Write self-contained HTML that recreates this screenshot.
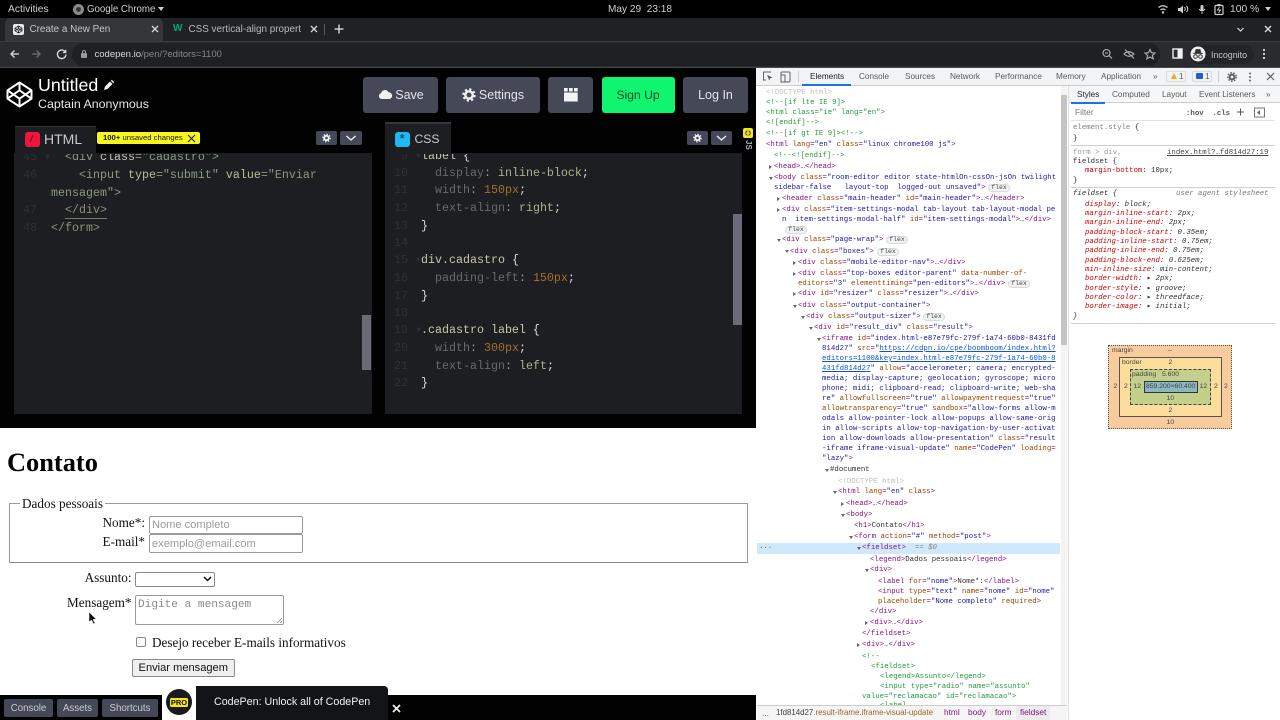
<!DOCTYPE html>
<html lang="en"><head><meta charset="utf-8"><title>Create a New Pen</title>
<style>
*{box-sizing:border-box}
html,body{margin:0;padding:0;width:1280px;height:720px;overflow:hidden;background:#000;font-family:"Liberation Sans",sans-serif}
.b{position:absolute}
.t{position:absolute;white-space:pre}
.btn{position:absolute;top:77px;height:36px;background:#444857;border-radius:3px;color:#e4e4ea;font-size:12.5px;line-height:36px;text-align:center;white-space:pre}
.m{font-family:"Liberation Mono",monospace}
.d{position:absolute;white-space:pre;font:7.35px/10px "Liberation Mono",monospace;color:#333;margin-top:2px}
s{color:#881280;text-decoration:none}
u{color:#994500;text-decoration:none}
em{color:#1a1aa6;font-style:normal}
em.l{color:#1155cc;text-decoration:underline}
.c{color:#239b3c}
.o::before,.x::before{content:"";position:absolute;left:-5.5px}
.o::before{top:3.5px;border-left:2.2px solid transparent;border-right:2.2px solid transparent;border-top:3.6px solid #666}
.x::before{top:3px;border-top:2.2px solid transparent;border-bottom:2.2px solid transparent;border-left:3.6px solid #666}
.fx{position:absolute;width:22px;height:8px;border:1px solid #d8dadd;background:#f1f3f4;border-radius:4px;font:6.5px/6px "Liberation Mono",monospace;color:#444;text-align:center;margin-top:2px}
.tab{position:absolute;top:72px;font-size:8.2px;line-height:10px;color:#5a5a5a;white-space:pre}
.st{position:absolute;white-space:pre;font:7.35px/9px "Liberation Mono",monospace;color:#303030;margin-top:2px}
.st i{color:#c80000}
.code{position:absolute;white-space:pre;font:11.67px/17px "Liberation Mono",monospace;margin-top:1px}
.ln{position:absolute;white-space:pre;font:11.67px/17px "Liberation Mono",monospace;color:#2f3035;margin-top:1px}
.bm{position:absolute;font-size:6.8px;line-height:8px;color:#444;white-space:pre}
.ser{position:absolute;white-space:pre;font:13.2px/16px "Liberation Serif",serif;color:#111}
.inp{position:absolute;background:#fff;border:1px solid #9a9a9a;border-radius:2px;font:11.1px/16px "Liberation Sans",sans-serif;color:#9b9b9b;padding-left:2px;white-space:pre}
.fb{position:absolute;top:699px;height:18px;background:#444857;border-radius:2px;color:#c9c9d2;font-size:9.7px;line-height:19px;text-align:center}
</style></head><body>

<!-- GNOME top bar -->
<div class="b" style="left:0;top:0;width:1280px;height:18px;background:#000"></div>
<div class="t" style="left:8px;top:4px;font-size:10.3px;line-height:12px;color:#d0d0d0">Activities</div>
<svg class="b" style="left:72px;top:3px" width="13" height="13"><circle cx="6.5" cy="6.5" r="5.5" fill="#8a8a8a"/><circle cx="6.5" cy="6.5" r="2.4" fill="#333"/></svg>
<div class="t" style="left:87px;top:4px;font-size:9.7px;line-height:12px;color:#d0d0d0">Google Chrome</div>
<div class="b" style="left:158px;top:7px;border-left:3.5px solid transparent;border-right:3.5px solid transparent;border-top:4px solid #d0d0d0"></div>
<div class="t" style="left:608px;top:4px;font-size:10.1px;line-height:12px;color:#d0d0d0">May 29  23:18</div>
<svg class="b" style="left:1157px;top:3px" width="80" height="13" fill="none" stroke="#d0d0d0">
<path d="M1.5 4.5Q6 1 10.5 4.500M3.500 7Q6 5 8.500 7" stroke-width="1.300"/><circle cx="6" cy="9.500" r="1.200" fill="#d0d0d0" stroke="none"/>
<path d="M21 5h2l3-2.500v8L23 8h-2z" fill="#d0d0d0" stroke="none"/><path d="M27.500 4q1.500 2 0 4M29.500 3q2.500 3 0 6"/>
<rect x="43.500" y="2" width="3" height="6" rx="1.500" fill="#d0d0d0" stroke="none"/><path d="M42 6q3 4 6 0M45 9v2"/>
<rect x="58" y="2.500" width="8" height="9" rx="1" stroke-width="1.200"/><path d="M60.500 1.500h3" stroke-width="1.200"/><path d="M62.500 4l-2 3h3l-2 3" stroke-width=".9"/>
</svg>
<div class="t" style="left:1230px;top:4px;font-size:10.3px;line-height:12px;color:#d0d0d0">100 %</div>
<div class="b" style="left:1265px;top:7px;border-left:3.500px solid transparent;border-right:3.500px solid transparent;border-top:4px solid #d0d0d0"></div>

<!-- Chrome tabs -->
<div class="b" style="left:0;top:18px;width:1280px;height:23px;background:#202124"></div>
<div class="b" style="left:5px;top:18px;width:158px;height:23px;background:#35363a;border-radius:6px 6px 0 0"></div>
<div class="b" style="left:13px;top:24px;width:11px;height:11px;background:#e8e8e8;border-radius:2px"></div>
<svg class="b" style="left:14px;top:25px" width="9" height="9" fill="none" stroke="#222" stroke-width=".8"><path d="M4.500 1L8 3.200V5.800L4.500 8 1 5.800V3.200zM1 3.200L4.500 5.500 8 3.200M4.500 1V3.300M1 5.800L4.500 3.400 8 5.800M4.500 8V5.600"/></svg>
<div class="t" style="left:29.500px;top:24px;font-size:9.9px;line-height:12px;color:#c4c5c8">Create a New Pen</div>
<svg class="b" style="left:151px;top:25px" width="8" height="8" stroke="#d8d8d8" stroke-width="1.300"><path d="M1 1L7 7M7 1L1 7"/></svg>
<div class="t" style="left:173px;top:22px;font-size:10px;line-height:13px;font-weight:bold;color:#04aa6d">W</div>
<div class="t" style="left:188.500px;top:24px;font-size:9.9px;line-height:12px;color:#b8b9bc;width:116px;overflow:hidden">CSS vertical-align propert</div>
<svg class="b" style="left:310px;top:25px" width="8" height="8" stroke="#d8d8d8" stroke-width="1.300"><path d="M1 1L7 7M7 1L1 7"/></svg>
<div class="b" style="left:324px;top:24px;width:1px;height:11px;background:#5a5a5e"></div>
<svg class="b" style="left:334px;top:24px" width="10" height="10" stroke="#e8e8e8" stroke-width="1.300"><path d="M5 .5V9.500M.5 5H9.500"/></svg>
<svg class="b" style="left:1236px;top:25px" width="40" height="9" fill="none" stroke="#d8d8d8" stroke-width="1.200"><path d="M1.500 3L4.500 6 7.500 3"/><path d="M29 1l6 6M35 1l-6 6" stroke-width="1.400"/></svg>

<!-- Chrome toolbar -->
<div class="b" style="left:0;top:41px;width:1280px;height:27px;background:#2a2b2e;border-top:1px solid #3b3c3f;border-bottom:1px solid #48494c"></div>
<div class="b" style="left:72px;top:43px;width:1088px;height:23px;background:#1f2023;border-radius:12px"></div>
<div class="b" style="left:1190px;top:45px;width:64px;height:19px;background:#232427;border-radius:10px"></div>
<svg class="b" style="left:9px;top:48px" width="60" height="12" fill="none" stroke-width="1.300"><path d="M10 6H2M5.500 2.500L2 6l3.500 3.500" stroke="#dcdcdc"/><path d="M23 6h8M27.500 2.500L31 6l-3.500 3.500" stroke="#6d6e71"/><path d="M56 3.500A4.300 4.300 0 1 0 57 6.500" stroke="#dcdcdc"/><path d="M57 1.500v3.300h-3.300" fill="#dcdcdc" stroke="#dcdcdc" stroke-width=".6"/></svg>
<svg class="b" style="left:80px;top:49px" width="8" height="10"><rect x="1" y="4" width="6" height="5" rx="1" fill="#9a9b9e"/><path d="M2.500 4V3a1.500 1.500 0 0 1 3 0V4" fill="none" stroke="#9a9b9e"/></svg>
<div class="t" style="left:94.500px;top:49px;font-size:9.5px;line-height:12px;color:#d6d6d8">codepen.io<span style="color:#85868a">/pen/?editors=1100</span></div>
<svg class="b" style="left:1101px;top:48px" width="56" height="12" fill="none" stroke="#b4b5b8" stroke-width="1.100"><circle cx="5.500" cy="5" r="3.500"/><path d="M8 7.500L11 10.500M4 5h3"/><path d="M23 6q4.500-4.500 10 0-5 4.500-10 0zM24 1.500L33 10.500"/><path d="M49 1.500l1.500 3.200 3.500.4-2.600 2.300.8 3.400-3.200-1.800-3.200 1.800.8-3.400L44 5.100l3.500-.4z"/></svg>
<svg class="b" style="left:1172px;top:48px" width="11" height="11"><rect x="1" y="1" width="9" height="9" fill="none" stroke="#f0f0f0" stroke-width="1.400"/><rect x="5.500" y="1" width="4.500" height="9" fill="#f0f0f0"/></svg>
<svg class="b" style="left:1190px;top:46px" width="16" height="16"><circle cx="8" cy="8" r="7.500" fill="#efefef"/><path d="M3 7.500h10M5 7l1-3.500h4L11 7z" fill="#333" stroke="#333" stroke-width=".7"/><circle cx="5.500" cy="10.500" r="1.800" fill="none" stroke="#333"/><circle cx="10.500" cy="10.500" r="1.800" fill="none" stroke="#333"/></svg>
<div class="t" style="left:1211px;top:49px;font-size:8.9px;line-height:12px;color:#c4c5c8">Incognito</div>
<svg class="b" style="left:1262px;top:48px" width="4" height="12" fill="#d8d8d8"><circle cx="2" cy="2" r="1.100"/><circle cx="2" cy="6" r="1.100"/><circle cx="2" cy="10" r="1.100"/></svg>

<!-- CodePen header -->
<div class="b" style="left:0;top:68px;width:756px;height:54px;background:#020203"></div>
<svg class="b" style="left:6px;top:81px" width="27" height="27" fill="none" stroke="#fff" stroke-width="2" stroke-linejoin="round"><path d="M13.500 1.500L25.500 9.300V17.700L13.500 25.500 1.500 17.700V9.300zM1.500 9.300L13.500 17.700 25.500 9.300M13.500 1.500V9.300M1.500 17.700L13.500 9.300 25.500 17.700M13.500 25.500V17.700"/></svg>
<div class="t" style="left:38px;top:75px;font-size:17.8px;line-height:20px;color:#fff;font-weight:500">Untitled</div>
<svg class="b" style="left:103px;top:79px" width="12" height="12" fill="#f2f2f2"><path d="M1 11l1-3.500 5-5 2.500 2.500-5 5zM7.800 1.800l1-1 2.400 2.400-1 1z"/></svg>
<div class="t" style="left:38px;top:96px;font-size:12.400px;line-height:16px;color:#e6e6e6">Captain Anonymous</div>
<div class="btn" style="left:363px;width:75px;padding-left:18px">Save</div>
<svg class="b" style="left:378px;top:89px" width="15" height="11" fill="#f0f0f0"><path d="M3.500 10A3 3 0 0 1 3 4.200 4 4 0 0 1 10.500 3.300 3.400 3.400 0 0 1 11.500 10z"/></svg>
<div class="btn" style="left:446px;width:94px;padding-left:17px">Settings</div>
<svg class="b" style="left:461.500px;top:88px" width="14" height="14" fill="none"><circle cx="7" cy="7" r="3.700" stroke="#f0f0f0" stroke-width="2.400"/><circle cx="7" cy="7" r="5.600" stroke="#f0f0f0" stroke-width="2.200" stroke-dasharray="2.200 2.200"/></svg>
<div class="btn" style="left:548px;width:45px"></div>
<svg class="b" style="left:564px;top:88px" width="14" height="14" fill="#f4f4f4"><rect x="0" y="0" width="3.700" height="3.500"/><rect x="5" y="0" width="3.700" height="3.500"/><rect x="10" y="0" width="3.700" height="3.500"/><rect x="0" y="4.500" width="13.700" height="9"/></svg>
<div class="btn" style="left:601.500px;width:73px;background:#10f56f;color:#0a4a2a;font-size:12.2px">Sign Up</div>
<div class="btn" style="left:683px;width:65px">Log In</div>

<!-- Editor panes -->
<div class="b" style="left:0;top:122px;width:756px;height:306px;background:#020203"></div>
<div class="b" style="left:14px;top:153px;width:358px;height:261px;background:#1d1e22"></div>
<div class="b" style="left:385px;top:153px;width:357px;height:261px;background:#1d1e22"></div>
<div class="b" style="left:15px;top:126px;width:81px;height:28px;background:#1d1e22;border-top:1px solid #333"></div>
<div class="b" style="left:385px;top:122px;width:66px;height:32px;background:#1d1e22;border-top:2px solid #34363c"></div>
<div class="b" style="left:25px;top:132px;width:15px;height:15px;border-radius:3px;background:#f0153f"></div>
<div class="t" style="left:30px;top:132px;font:italic bold 10px/15px 'Liberation Sans',sans-serif;color:#7c0a20">/</div>
<div class="t" style="left:44px;top:130px;font-size:14px;line-height:18px;color:#c7c9d0">HTML</div>
<div class="b" style="left:97px;top:132px;width:103px;height:11.500px;background:#f7f71e;border-radius:2px"></div>
<div class="t" style="left:103px;top:131.500px;font-size:7.7px;line-height:12px;color:#111"><b>100+</b> unsaved changes</div>
<svg class="b" style="left:187px;top:133.500px" width="9" height="9" stroke="#222" stroke-width="1.100"><path d="M1 1L8 8M8 1L1 8"/></svg>
<div class="b" style="left:395px;top:132px;width:15px;height:15px;border-radius:3px;background:#1fb8f0"></div>
<div class="t" style="left:398.500px;top:133px;font:bold 12px/15px 'Liberation Mono',monospace;color:#0a4a6a">*</div>
<div class="t" style="left:414.500px;top:130px;font-size:12.2px;line-height:18px;color:#c7c9d0">CSS</div>

<div class="b" style="left:316px;top:131px;width:21px;height:14px;background:#444857;border-radius:2px"></div>
<div class="b" style="left:340px;top:131px;width:22px;height:14px;background:#444857;border-radius:2px"></div>
<div class="b" style="left:687px;top:131px;width:21px;height:14px;background:#444857;border-radius:2px"></div>
<div class="b" style="left:711px;top:131px;width:21px;height:14px;background:#444857;border-radius:2px"></div>
<svg class="b" style="left:316px;top:131px" width="420" height="14" fill="none"><g stroke="#f0f0f0"><circle cx="10.500" cy="7" r="2.200" stroke-width="1.800"/><circle cx="10.500" cy="7" r="3.600" stroke-width="1.500" stroke-dasharray="1.300 1.500"/><circle cx="381.500" cy="7" r="2.200" stroke-width="1.800"/><circle cx="381.500" cy="7" r="3.600" stroke-width="1.500" stroke-dasharray="1.300 1.500"/><path d="M30.500 5L35 9l4.500-4M401 5l4.500 4 4.500-4" stroke-width="1.400"/></g></svg>

<div class="b" style="left:743px;top:128px;width:10px;height:10px;background:#f2e71e;border-radius:2px"></div>
<svg class="b" style="left:745px;top:130px" width="6" height="6" fill="none" stroke="#444" stroke-width="1"><path d="M.8 3A2.200 2.200 0 0 1 5.200 3M5.200 3A2.200 2.200 0 0 1 .8 3" stroke-dasharray="3 1"/></svg>
<div class="t" style="left:743px;top:140px;font-size:8px;line-height:10px;color:#b0b0b8;transform:rotate(90deg);transform-origin:5px 5px;font-weight:bold">JS</div>

<div class="b" style="left:362px;top:315px;width:9px;height:55px;background:#6a6b76"></div>
<div class="b" style="left:733px;top:214px;width:9px;height:111px;background:#6a6b76"></div>

<!-- HTML code -->
<div class="b" style="left:14px;top:154px;width:348px;height:260px;overflow:hidden">
<div class="ln" style="left:9px;top:-6px">45 ▾</div>
<div class="code" style="left:37px;top:-6px;color:#8a9a80">  &lt;div <span style="color:#c6c6b6">class</span>="cadastro"&gt;</div>
</div>
<div class="ln" style="left:23px;top:166px">46</div>
<div class="code" style="left:51px;top:166px;color:#8a9a80">    &lt;input <span style="color:#bdbd95">type</span>="submit" <span style="color:#bdbd95">value</span>="Enviar</div>
<div class="code" style="left:51px;top:183.500px;color:#8a9a80">mensagem"&gt;</div>
<div class="ln" style="left:23px;top:201px">47</div>
<div class="code" style="left:51px;top:201px;color:#8e9278">  &lt;/div&gt;</div>
<div class="b" style="left:65px;top:217.500px;width:42px;height:1px;background:#77786a"></div>
<div class="ln" style="left:23px;top:218.500px">48</div>
<div class="code" style="left:51px;top:218.500px;color:#8e9278">&lt;/form&gt;</div>

<!-- CSS code -->
<div class="b" style="left:385px;top:154px;width:340px;height:30px;overflow:hidden">
<div class="code" style="left:36px;top:-7.500px;color:#c8c8a8">label <span style="color:#ddd">{</span></div>
<div class="ln" style="left:9px;top:-7.500px"> 9 ▾</div>
</div>
<div class="ln" style="left:394px;top:163.500px">10</div><div class="code" style="left:421px;top:163.500px;color:#68686e">  display<span style="color:#999">:</span> <span style="color:#adb08a">inline-block</span><span style="color:#ddd">;</span></div>
<div class="ln" style="left:394px;top:181px">11</div><div class="code" style="left:421px;top:181px;color:#68686e">  width<span style="color:#999">:</span> <span style="color:#a56f2a">150px</span><span style="color:#ddd">;</span></div>
<div class="ln" style="left:394px;top:198.500px">12</div><div class="code" style="left:421px;top:198.500px;color:#68686e">  text-align<span style="color:#999">:</span> <span style="color:#adb08a">right</span><span style="color:#ddd">;</span></div>
<div class="ln" style="left:394px;top:216.500px">13</div><div class="code" style="left:421px;top:216.500px;color:#ddd">}</div>
<div class="ln" style="left:394px;top:233.500px">14</div>
<div class="ln" style="left:394px;top:251px">15 ▾</div><div class="code" style="left:421px;top:251px;color:#c8c8a8">div.cadastro <span style="color:#ddd">{</span></div>
<div class="ln" style="left:394px;top:269px">16</div><div class="code" style="left:421px;top:269px;color:#68686e">  padding-left<span style="color:#999">:</span> <span style="color:#a56f2a">150px</span><span style="color:#ddd">;</span></div>
<div class="ln" style="left:394px;top:286.500px">17</div><div class="code" style="left:421px;top:286.500px;color:#ddd">}</div>
<div class="ln" style="left:394px;top:303.500px">18</div>
<div class="ln" style="left:394px;top:321px">19 ▾</div><div class="code" style="left:421px;top:321px;color:#c8c8a8">.cadastro label <span style="color:#ddd">{</span></div>
<div class="ln" style="left:394px;top:338.500px">20</div><div class="code" style="left:421px;top:338.500px;color:#68686e">  width<span style="color:#999">:</span> <span style="color:#a56f2a">300px</span><span style="color:#ddd">;</span></div>
<div class="ln" style="left:394px;top:356.500px">21</div><div class="code" style="left:421px;top:356.500px;color:#68686e">  text-align<span style="color:#999">:</span> <span style="color:#adb08a">left</span><span style="color:#ddd">;</span></div>
<div class="ln" style="left:394px;top:373.500px">22</div><div class="code" style="left:421px;top:373.500px;color:#ddd">}</div>

<!-- Preview -->
<div class="b" style="left:0;top:428px;width:756px;height:292px;background:#fff"></div>
<div class="t" style="left:7px;top:447px;font:bold 26.400px/30px 'Liberation Serif',serif;color:#000">Contato</div>
<div class="b" style="left:9px;top:503px;width:739px;height:60px;border:1px solid #9a9a9a;border-bottom-color:#8a8a8a"></div>
<div class="b" style="left:20px;top:500px;width:85px;height:8px;background:#fff"></div>
<div class="ser" style="left:22px;top:495.500px">Dados pessoais</div>
<div class="ser" style="left:45px;width:100px;top:515px;text-align:right">Nome*:</div>
<div class="ser" style="left:45px;width:100px;top:534px;text-align:right">E-mail*</div>
<div class="inp" style="left:149px;top:516px;width:153.500px;height:18px">Nome completo</div>
<div class="inp" style="left:149px;top:534px;width:153.500px;height:19px;padding-top:1px">exemplo@email.com</div>
<div class="ser" style="left:31.500px;width:100px;top:570px;text-align:right">Assunto:</div>
<div class="ser" style="left:31.500px;width:100px;top:595px;text-align:right">Mensagem*</div>
<div class="inp" style="left:135px;top:571.500px;width:80px;height:15px;border-color:#8a8a8a"></div>
<svg class="b" style="left:203px;top:576px" width="9" height="6" fill="none" stroke="#111" stroke-width="1.500"><path d="M1 1L4.500 4.500 8 1"/></svg>
<div class="inp" style="left:135px;top:595px;width:149px;height:30px;font:11.100px/14px 'Liberation Mono',monospace;color:#8a8a8a;padding-top:2px">Digite a mensagem</div>
<svg class="b" style="left:276px;top:617px" width="7" height="7" stroke="#888" stroke-width=".8"><path d="M1 6L6 1M4 6L6 4"/></svg>
<div class="b" style="left:135.500px;top:637px;width:10px;height:10px;border:1px solid #888;border-radius:2px;background:#fff"></div>
<div class="ser" style="left:152px;top:634.500px">Desejo receber E-mails informativos</div>
<div class="b" style="left:132px;top:658.500px;width:102.500px;height:18.500px;background:#efefef;border:1px solid #8a8a8a;border-radius:2px;font-size:11.100px;line-height:16.500px;text-align:center;color:#111;white-space:pre">Enviar mensagem</div>
<svg class="b" style="left:87px;top:611px" width="11" height="15"><path d="M2 1L2 11 4.500 9 6.500 13 8 12.300 6 8.500 9.200 8.300z" fill="#111" stroke="#fff" stroke-width=".5"/></svg>

<!-- Footer -->
<div class="b" style="left:0;top:695px;width:756px;height:25px;background:#020203"></div>
<div class="fb" style="left:4px;width:49px">Console</div>
<div class="fb" style="left:57px;width:41px">Assets</div>
<div class="fb" style="left:102px;width:56px">Shortcuts</div>
<div class="b" style="left:162px;top:685px;width:34px;height:35px;background:#fff"></div>
<div class="b" style="left:166px;top:689px;width:26px;height:26px;border-radius:50%;background:#1b1b1f"></div>
<div class="b" style="left:170px;top:698px;width:18px;height:9px;background:#f5e61e;border-radius:1.500px;font:bold 7.500px/9px 'Liberation Sans',sans-serif;color:#111;text-align:center">PRO</div>
<div class="b" style="left:196px;top:686px;width:192px;height:34px;background:#131417;border-radius:0 4px 0 0"></div>
<div class="t" style="left:214px;top:695px;font-size:10.7px;line-height:15px;color:#f2f2f2">CodePen: Unlock all of CodePen</div>
<svg class="b" style="left:391.500px;top:704px" width="9" height="9" stroke="#eee" stroke-width="1.800"><path d="M1 1L8 8M8 1L1 8"/></svg>

<!-- DevTools -->
<div class="b" style="left:756px;top:68px;width:524px;height:652px;background:#fff"></div>
<div class="b" style="left:756px;top:68px;width:524px;height:18px;background:#f1f3f4;border-bottom:1px solid #cbcdd1"></div>
<svg class="b" style="left:762px;top:71px" width="32" height="12" fill="none" stroke="#5f6368"><path d="M9 1H1.500V9H4"/><path d="M5 4l5.500 2.300-2.200 1-1 2.200z" fill="#5f6368" stroke="none"/><rect x="19" y="1" width="9" height="10" rx="1"/><rect x="19" y="4" width="4" height="7" fill="#f1f3f4"/></svg>
<div class="b" style="left:798px;top:71px;width:1px;height:11px;background:#cbcdd1"></div>
<div class="tab" style="left:810px;color:#222">Elements</div>
<div class="tab" style="left:859px">Console</div>
<div class="tab" style="left:905px">Sources</div>
<div class="tab" style="left:950px">Network</div>
<div class="tab" style="left:995px">Performance</div>
<div class="tab" style="left:1056px">Memory</div>
<div class="tab" style="left:1101px">Application</div>
<div class="tab" style="left:1153px">»</div>
<div class="b" style="left:802px;top:84px;width:49px;height:2px;background:#1a73e8"></div>
<div class="b" style="left:1166px;top:71px;width:20px;height:11px;border:1px solid #d8dadd;border-radius:2px"></div>
<div class="b" style="left:1171px;top:73px;border-left:3px solid transparent;border-right:3px solid transparent;border-bottom:6px solid #f2ab26"></div>
<div class="tab" style="left:1179px">1</div>
<div class="b" style="left:1192px;top:71px;width:20px;height:11px;border:1px solid #d8dadd;border-radius:2px"></div>
<div class="b" style="left:1196px;top:73px;width:7px;height:6px;background:#1a5fd8;border-radius:1px"></div>
<div class="tab" style="left:1205px">1</div>
<div class="b" style="left:1218px;top:71px;width:1px;height:11px;background:#cbcdd1"></div>
<svg class="b" style="left:1226px;top:71px" width="50" height="12" fill="none"><circle cx="6" cy="6" r="2.400" stroke="#5f6368" stroke-width="2"/><circle cx="6" cy="6" r="4.200" stroke="#5f6368" stroke-width="1.500" stroke-dasharray="1.500 1.500"/><g fill="#5f6368"><circle cx="24" cy="2.500" r="1"/><circle cx="24" cy="6" r="1"/><circle cx="24" cy="9.500" r="1"/></g><path d="M41 2l7 7M48 2l-7 7" stroke="#5f6368" stroke-width="1.200"/></svg>

<!-- Elements tree -->
<div class="b" style="left:1061px;top:86px;width:6px;height:620px;background:#f3f3f3"></div>
<div class="b" style="left:1061px;top:95px;width:6px;height:250px;background:#c4c4c4"></div>
<div class="b" style="left:1068px;top:86px;width:1px;height:634px;background:#dddddd"></div>
<div class="b" style="left:757px;top:542.500px;width:303px;height:11px;background:#cfe8fc"></div>

<div class="d" style="left:766px;top:86px;color:#c0c0c0">&lt;!DOCTYPE html&gt;</div>
<div class="d c" style="left:766px;top:96px">&lt;!--[if lte IE 9]&gt;</div>
<div class="d c" style="left:766px;top:106px">&lt;html class="ie" lang="en"&gt;</div>
<div class="d c" style="left:766px;top:116px">&lt;![endif]--&gt;</div>
<div class="d c" style="left:766px;top:126.500px">&lt;!--[if gt IE 9]&gt;&lt;!--&gt;</div>
<div class="d" style="left:766px;top:138px"><s>&lt;html</s> <u>lang</u><s>=</s><em>"en"</em> <u>class</u><s>=</s><em>"linux chrome100 js"</em><s>&gt;</s></div>
<div class="d c" style="left:774px;top:149px">&lt;!--&lt;![endif]--&gt;</div>
<div class="d x" style="left:774px;top:160px"><s>&lt;head&gt;</s>…<s>&lt;/head&gt;</s></div>
<div class="d o" style="left:774px;top:171px"><s>&lt;body</s> <u>class</u><s>=</s><em>"room-editor editor state-htmlOn-cssOn-jsOn twilight</em></div>
<div class="d" style="left:774px;top:181px"><em>sidebar-false   layout-top  logged-out unsaved"</em><s>&gt;</s></div>
<div class="fx" style="left:988px;top:182px">flex</div>
<div class="d x" style="left:782px;top:191.500px"><s>&lt;header</s> <u>class</u><s>=</s><em>"main-header"</em> <u>id</u><s>=</s><em>"main-header"</em><s>&gt;</s>…<s>&lt;/header&gt;</s></div>
<div class="d x" style="left:782px;top:203px"><s>&lt;div</s> <u>class</u><s>=</s><em>"item-settings-modal tab-layout tab-layout-modal pe</em></div>
<div class="d" style="left:782px;top:213px"><em>n  item-settings-modal-half"</em> <u>id</u><s>=</s><em>"item-settings-modal"</em><s>&gt;</s>…<s>&lt;/div&gt;</s></div>
<div class="fx" style="left:785px;top:223.500px">flex</div>
<div class="d o" style="left:782px;top:233px"><s>&lt;div</s> <u>class</u><s>=</s><em>"page-wrap"</em><s>&gt;</s></div>
<div class="fx" style="left:886px;top:234px">flex</div>
<div class="d o" style="left:790px;top:244.500px"><s>&lt;div</s> <u>class</u><s>=</s><em>"boxes"</em><s>&gt;</s></div>
<div class="fx" style="left:877px;top:245.500px">flex</div>
<div class="d x" style="left:798px;top:255.500px"><s>&lt;div</s> <u>class</u><s>=</s><em>"mobile-editor-nav"</em><s>&gt;</s>…<s>&lt;/div&gt;</s></div>
<div class="d x" style="left:798px;top:266.500px"><s>&lt;div</s> <u>class</u><s>=</s><em>"top-boxes editor-parent"</em> <u>data-number-of-</u></div>
<div class="d" style="left:798px;top:276.500px"><u>editors</u><s>=</s><em>"3"</em> <u>elementtiming</u><s>=</s><em>"pen-editors"</em><s>&gt;</s>…<s>&lt;/div&gt;</s></div>
<div class="fx" style="left:1008px;top:278px">flex</div>
<div class="d x" style="left:798px;top:287px"><s>&lt;div</s> <u>id</u><s>=</s><em>"resizer"</em> <u>class</u><s>=</s><em>"resizer"</em><s>&gt;</s>…<s>&lt;/div&gt;</s></div>
<div class="d o" style="left:798px;top:299px"><s>&lt;div</s> <u>class</u><s>=</s><em>"output-container"</em><s>&gt;</s></div>
<div class="d o" style="left:806px;top:310px"><s>&lt;div</s> <u>class</u><s>=</s><em>"output-sizer"</em><s>&gt;</s></div>
<div class="fx" style="left:923px;top:311px">flex</div>
<div class="d o" style="left:814px;top:321px"><s>&lt;div</s> <u>id</u><s>=</s><em>"result_div"</em> <u>class</u><s>=</s><em>"result"</em><s>&gt;</s></div>
<div class="d o" style="left:822px;top:332px"><s>&lt;iframe</s> <u>id</u><s>=</s><em>"index.html-e87e79fc-279f-1a74-60b0-8431fd</em></div>
<div class="d" style="left:822px;top:342px"><em>814d27"</em> <u>src</u><s>=</s><em>"<em class="l">https://cdpn.io/cpe/boomboom/index.html?</em></em></div>
<div class="d" style="left:822px;top:352px"><em class="l">editors=1100&amp;key=index.html-e87e79fc-279f-1a74-60b0-8</em></div>
<div class="d" style="left:822px;top:362px"><em class="l">431fd814d27</em><em>"</em> <u>allow</u><s>=</s><em>"accelerometer; camera; encrypted-</em></div>
<div class="d" style="left:822px;top:372px"><em>media; display-capture; geolocation; gyroscope; micro</em></div>
<div class="d" style="left:822px;top:382px"><em>phone; midi; clipboard-read; clipboard-write; web-sha</em></div>
<div class="d" style="left:822px;top:392px"><em>re"</em> <u>allowfullscreen</u><s>=</s><em>"true"</em> <u>allowpaymentrequest</u><s>=</s><em>"true"</em></div>
<div class="d" style="left:822px;top:402px"><u>allowtransparency</u><s>=</s><em>"true"</em> <u>sandbox</u><s>=</s><em>"allow-forms allow-m</em></div>
<div class="d" style="left:822px;top:412px"><em>odals allow-pointer-lock allow-popups allow-same-orig</em></div>
<div class="d" style="left:822px;top:422px"><em>in allow-scripts allow-top-navigation-by-user-activat</em></div>
<div class="d" style="left:822px;top:432px"><em>ion allow-downloads allow-presentation"</em> <u>class</u><s>=</s><em>"result</em></div>
<div class="d" style="left:822px;top:442px"><em>-iframe iframe-visual-update"</em> <u>name</u><s>=</s><em>"CodePen"</em> <u>loading</u><s>=</s></div>
<div class="d" style="left:822px;top:452px"><em>"lazy"</em><s>&gt;</s></div>
<div class="d o" style="left:830px;top:463px;color:#333">#document</div>
<div class="d" style="left:838px;top:474.500px;color:#c0c0c0">&lt;!DOCTYPE html&gt;</div>
<div class="d o" style="left:838px;top:485px"><s>&lt;html</s> <u>lang</u><s>=</s><em>"en"</em> <u>class</u><s>&gt;</s></div>
<div class="d x" style="left:846px;top:496.500px"><s>&lt;head&gt;</s>…<s>&lt;/head&gt;</s></div>
<div class="d o" style="left:846px;top:508px"><s>&lt;body&gt;</s></div>
<div class="d" style="left:854px;top:519px"><s>&lt;h1&gt;</s>Contato<s>&lt;/h1&gt;</s></div>
<div class="d o" style="left:854px;top:530px"><s>&lt;form</s> <u>action</u><s>=</s><em>"#"</em> <u>method</u><s>=</s><em>"post"</em><s>&gt;</s></div>
<div class="t" style="left:759px;top:543px;font:7.350px/9px 'Liberation Mono',monospace;color:#666">...</div>
<div class="d o" style="left:862px;top:541px"><s>&lt;fieldset&gt;</s> <span style="color:#888"> == <i>$0</i></span></div>
<div class="d" style="left:870px;top:552.500px"><s>&lt;legend&gt;</s>Dados pessoais<s>&lt;/legend&gt;</s></div>
<div class="d o" style="left:870px;top:563px"><s>&lt;div&gt;</s></div>
<div class="d" style="left:878px;top:574.500px"><s>&lt;label</s> <u>for</u><s>=</s><em>"nome"</em><s>&gt;</s>Nome*:<s>&lt;/label&gt;</s></div>
<div class="d" style="left:878px;top:585px"><s>&lt;input</s> <u>type</u><s>=</s><em>"text"</em> <u>name</u><s>=</s><em>"nome"</em> <u>id</u><s>=</s><em>"nome"</em></div>
<div class="d" style="left:878px;top:595px"><u>placeholder</u><s>=</s><em>"Nome completo"</em> <u>required</u><s>&gt;</s></div>
<div class="d" style="left:870px;top:605px"><s>&lt;/div&gt;</s></div>
<div class="d x" style="left:870px;top:616px"><s>&lt;div&gt;</s>…<s>&lt;/div&gt;</s></div>
<div class="d" style="left:862px;top:627px"><s>&lt;/fieldset&gt;</s></div>
<div class="d x" style="left:862px;top:638px"><s>&lt;div&gt;</s>…<s>&lt;/div&gt;</s></div>
<div class="d c" style="left:862px;top:649.500px">&lt;!--</div>
<div class="d c" style="left:871px;top:659.500px">&lt;fieldset&gt;</div>
<div class="d c" style="left:880px;top:669.500px">&lt;legend&gt;Assunto&lt;/legend&gt;</div>
<div class="d c" style="left:880px;top:679.500px">&lt;input type="radio" name="assunto"</div>
<div class="d c" style="left:862px;top:689.500px">value="reclamacao" id="reclamacao"&gt;</div>
<div class="d c" style="left:880px;top:698.500px;height:6px;overflow:hidden">&lt;label</div>

<!-- Breadcrumbs -->
<div class="b" style="left:757px;top:705px;width:310px;height:15px;background:#f5f5f5;border-top:1px solid #cbcdd1"></div>
<div class="b" style="left:1016px;top:706px;width:34px;height:14px;background:#ececec"></div>
<div class="t" style="left:762px;top:707px;font-size:8.300px;line-height:12px;color:#555">...</div>
<div class="t" style="left:776px;top:707px;font-size:7.9px;line-height:11px;color:#444">1fd814d27<span style="color:#a0622a">.result-iframe.iframe-visual-update</span></div>
<div class="t" style="left:944px;top:707px;font-size:8.300px;line-height:11px;color:#881280">html</div>
<div class="t" style="left:968px;top:707px;font-size:8.300px;line-height:11px;color:#881280">body</div>
<div class="t" style="left:995px;top:707px;font-size:8.300px;line-height:11px;color:#881280">form</div>
<div class="t" style="left:1020px;top:707px;font-size:8.300px;line-height:11px;color:#881280">fieldset</div>

<!-- Styles pane -->
<div class="b" style="left:1069px;top:86px;width:211px;height:17px;background:#f5f6f7;border-bottom:1px solid #cbcdd1"></div>
<div class="tab" style="left:1077px;top:90px;color:#222">Styles</div>
<div class="tab" style="left:1112px;top:90px">Computed</div>
<div class="tab" style="left:1162px;top:90px">Layout</div>
<div class="tab" style="left:1199px;top:90px">Event Listeners</div>
<div class="tab" style="left:1266px;top:90px">»</div>
<div class="b" style="left:1071px;top:102px;width:34px;height:2px;background:#1a73e8"></div>
<div class="t" style="left:1075px;top:107px;font-size:8.400px;line-height:10px;color:#777">Filter</div>
<div class="t" style="left:1186px;top:110px;font:bold 7.350px/9px 'Liberation Mono',monospace;color:#555">:hov  .cls</div>
<svg class="b" style="left:1236px;top:107px" width="30" height="12" fill="none" stroke="#555"><path d="M4.500 1.500v7M1 5h7" stroke-width="1"/><rect x="18.500" y="1" width="10" height="9" stroke="#777"/><path d="M24 3v5l-3-2.500z" fill="#666" stroke="none"/></svg>
<div class="b" style="left:1071px;top:120px;width:204px;height:1px;background:#e4e4e4"></div>
<div class="st" style="left:1073px;top:121.500px;color:#808080">element.style <span style="color:#222">{</span></div>
<div class="st" style="left:1073px;top:133px">}</div>
<div class="b" style="left:1071px;top:145px;width:204px;height:1px;background:#cfcfcf"></div>
<div class="st" style="left:1073px;top:147px;color:#999">form &gt; div,</div>
<div class="st" style="left:1167px;top:147px;text-decoration:underline;color:#444">index.html?…fd814d27:19</div>
<div class="st" style="left:1073px;top:155.500px">fieldset {</div>
<div class="st" style="left:1085px;top:165px"><i style="font-style:normal">margin-bottom</i>: 10px;</div>
<div class="st" style="left:1073px;top:174.500px">}</div>
<div class="b" style="left:1071px;top:186.500px;width:204px;height:1px;background:#cfcfcf"></div>
<div class="st" style="left:1073px;top:188px;font-style:italic">fieldset {</div>
<div class="st" style="left:1176px;top:188px;font-style:italic;color:#777">user agent stylesheet</div>
<div class="st" style="left:1085px;top:198.500px;font-style:italic"><i>display</i>: block;</div>
<div class="st" style="left:1085px;top:208px;font-style:italic"><i>margin-inline-start</i>: 2px;</div>
<div class="st" style="left:1085px;top:217px;font-style:italic"><i>margin-inline-end</i>: 2px;</div>
<div class="st" style="left:1085px;top:226.500px;font-style:italic"><i>padding-block-start</i>: 0.35em;</div>
<div class="st" style="left:1085px;top:235.500px;font-style:italic"><i>padding-inline-start</i>: 0.75em;</div>
<div class="st" style="left:1085px;top:245px;font-style:italic"><i>padding-inline-end</i>: 0.75em;</div>
<div class="st" style="left:1085px;top:254.500px;font-style:italic"><i>padding-block-end</i>: 0.625em;</div>
<div class="st" style="left:1085px;top:263.500px;font-style:italic"><i>min-inline-size</i>: min-content;</div>
<div class="st" style="left:1085px;top:273px;font-style:italic"><i>border-width</i>: ▸ 2px;</div>
<div class="st" style="left:1085px;top:282.500px;font-style:italic"><i>border-style</i>: ▸ groove;</div>
<div class="st" style="left:1085px;top:291.500px;font-style:italic"><i>border-color</i>: ▸ threedface;</div>
<div class="st" style="left:1085px;top:301px;font-style:italic"><i>border-image</i>: ▸ initial;</div>
<div class="st" style="left:1073px;top:310.500px;font-style:italic">}</div>
<div class="b" style="left:1071px;top:322.500px;width:204px;height:1px;background:#cfcfcf"></div>

<!-- Box model -->
<div class="b" style="left:1108px;top:344.500px;width:124px;height:84.500px;background:#f9cc9d;border:1px dotted #555"></div>
<div class="b" style="left:1119px;top:357px;width:103px;height:60px;background:#fddd9b;border:1px solid #555"></div>
<div class="b" style="left:1129.500px;top:368.500px;width:81.500px;height:36.500px;background:#c3d08b;border:1px dashed #444"></div>
<div class="b" style="left:1143.500px;top:380.500px;width:54px;height:12.500px;background:#8cb6c0;border:1px solid #333"></div>
<div class="bm" style="left:1112px;top:347px">margin</div>
<div class="bm" style="left:1168px;top:347px">–</div>
<div class="bm" style="left:1122px;top:359px">border</div>
<div class="bm" style="left:1168.500px;top:359px">2</div>
<div class="bm" style="left:1132px;top:371px">padding</div>
<div class="bm" style="left:1162px;top:371px">5.600</div>
<div class="bm" style="left:1146px;top:383px;font-size:6.800px">859.200×60.400</div>
<div class="bm" style="left:1133.500px;top:383px">12</div>
<div class="bm" style="left:1199.500px;top:383px">12</div>
<div class="bm" style="left:1113.500px;top:383px">2</div>
<div class="bm" style="left:1124px;top:383px">2</div>
<div class="bm" style="left:1214px;top:383px">2</div>
<div class="bm" style="left:1224px;top:383px">2</div>
<div class="bm" style="left:1166.500px;top:395px">10</div>
<div class="bm" style="left:1168.500px;top:407px">2</div>
<div class="bm" style="left:1166.500px;top:419px">10</div>

</body></html>
